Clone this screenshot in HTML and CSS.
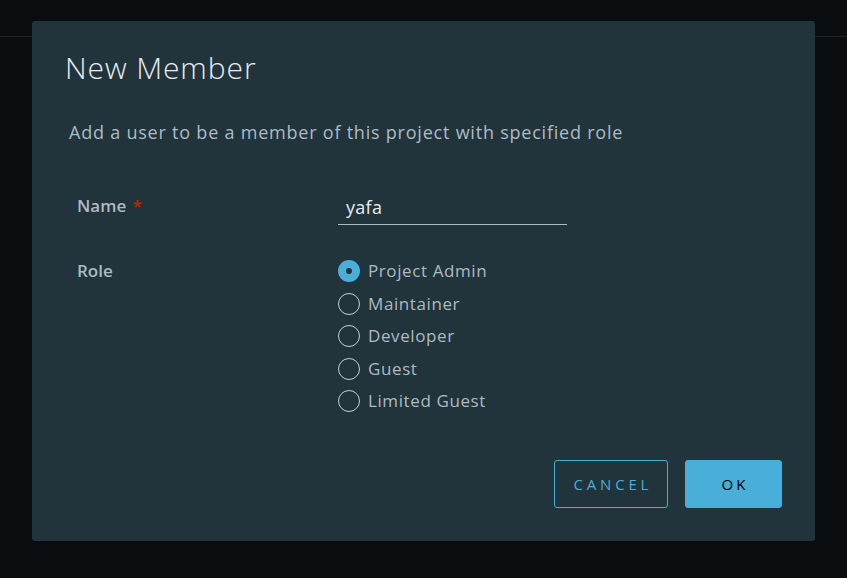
FILE: index.html
```html
<!DOCTYPE html>
<html>
<head>
<meta charset="utf-8">
<link rel="stylesheet" href="styles.css">
</head>
<body>
<div class="page-header"></div>
<div class="modal">
  <h3 class="modal-title">New Member</h3>
  <p class="modal-desc">Add a user to be a member of this project with specified role</p>
  <div class="form">
    <div class="row row-name">
      <label class="label">Name <span class="req">*</span></label>
      <div class="control">
        <div class="input">yafa</div>
      </div>
    </div>
    <div class="row">
      <label class="label">Role</label>
      <div class="control radios">
        <div class="radio checked"><span class="circle"></span><span class="rtext">Project Admin</span></div>
        <div class="radio"><span class="circle"></span><span class="rtext">Maintainer</span></div>
        <div class="radio"><span class="circle"></span><span class="rtext">Developer</span></div>
        <div class="radio"><span class="circle"></span><span class="rtext">Guest</span></div>
        <div class="radio"><span class="circle"></span><span class="rtext">Limited Guest</span></div>
      </div>
    </div>
  </div>
  <div class="footer">
    <button class="btn btn-outline">CANCEL</button>
    <button class="btn btn-primary">OK</button>
  </div>
</div>
</body>
</html>
```
FILE: styles.css
```css
* { box-sizing: border-box; }
html, body {
  margin: 0;
  padding: 0;
  background: #090d10;
  height: 100%;
  font-family: "Open Sans", "Liberation Sans", sans-serif;
}
.page-header {
  height: 37px;
  border-bottom: 1px solid #1c252b;
}
.modal {
  position: absolute;
  left: 32px;
  top: 21px;
  width: 783px;
  height: 520px;
  background: #21333b;
  border-radius: 3px;
  padding: 0 33px;
}
.modal-title {
  margin: 0;
  padding-top: 28px;
  font-size: 30px;
  font-weight: 300;
  letter-spacing: 0.9px;
  line-height: 38px;
  color: #e9ecef;
}
.modal-desc {
  margin: 0;
  margin-top: 33px;
  padding-left: 4px;
  font-size: 18px;
  letter-spacing: 0.78px;
  line-height: 24px;
  color: #adbbc4;
}
.form {
  margin-top: 50px;
  padding-left: 12px;
}
.row {
  display: grid;
  grid-template-columns: 261px 1fr;
}
.row-name {
  margin-bottom: 34px;
}
.label {
  font-size: 17px;
  font-weight: 600;
  color: #adbbc4;
  line-height: 24px;
}
.req {
  color: #c92100;
  margin-left: 2px;
}
.input {
  width: 229px;
  border-bottom: 1px solid #acbac3;
  padding: 0 0 5px 8px;
  font-size: 18px;
  letter-spacing: 0.3px;
  line-height: 24px;
  color: #e9ecef;
  margin-top: 1px;
}
.radios {
  display: flex;
  flex-direction: column;
  gap: 8.5px;
}
.radio {
  display: flex;
  align-items: center;
  gap: 8px;
  height: 24px;
}
.circle {
  width: 22px;
  height: 22px;
  border-radius: 50%;
  border: 1.5px solid #c5d0d6;
  flex: none;
}
.checked .circle {
  border: 8px solid #49afd9;
  background: #21333b;
}
.rtext {
  font-size: 17px;
  letter-spacing: 0.6px;
  color: #adbbc4;
  line-height: 24px;
}
.footer {
  position: absolute;
  right: 33px;
  bottom: 33px;
  display: flex;
  gap: 17px;
}
.btn {
  height: 48px;
  border-radius: 3px;
  font-family: inherit;
  font-size: 15px;
  letter-spacing: 3.8px;
  text-indent: 3.8px;
  font-weight: 500;
  cursor: pointer;
}
.btn-outline {
  width: 114px;
  background: transparent;
  border: 1px solid #49afd9;
  color: #49afd9;
}
.btn-primary {
  width: 97px;
  background: #49afd9;
  border: 1px solid #49afd9;
  color: #000;
  letter-spacing: 3px;
  text-indent: 3px;
}
```
